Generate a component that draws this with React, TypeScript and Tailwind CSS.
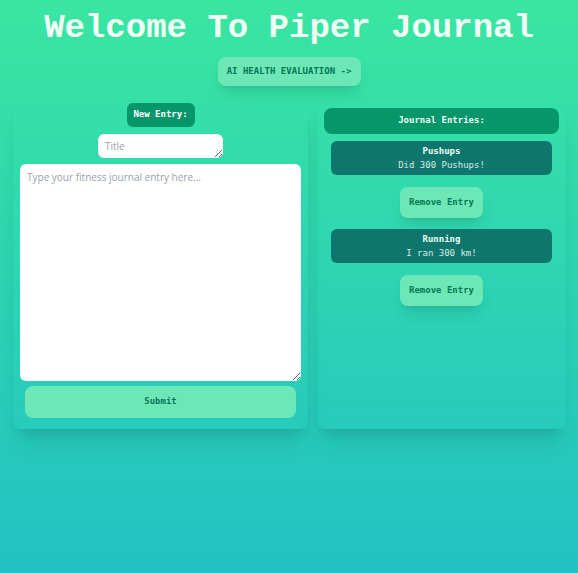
import { useState } from "react";

type Entry = { title: string; body: string };

const mono = "font-['Liberation_Mono',monospace]";
const small = "font-['DejaVu_Sans_Mono',monospace] text-[9px]";

export default function App() {
  const [entries, setEntries] = useState<Entry[]>([
    { title: "Pushups", body: "Did 300 Pushups!" },
    { title: "Running", body: "I ran 300 km!" },
  ]);
  const [title, setTitle] = useState("");
  const [body, setBody] = useState("");

  const submit = () => {
    if (!title && !body) return;
    setEntries([...entries, { title, body }]);
    setTitle("");
    setBody("");
  };

  return (
    <div className="min-h-[573px] w-full bg-gradient-to-b from-[#3ae6a0] to-[#21c2c3] pb-10">
      <h1
        className={`${mono} pt-[6px] text-center text-[34px] leading-[44px] font-bold text-[#f3fdf8]`}
      >
        Welcome To Piper Journal
      </h1>

      <div className="mt-[7px] flex justify-center">
        <button
          className={`${small} h-[29px] w-[143px] rounded-lg bg-[#6ee7b7] font-bold text-[#047857] shadow-lg`}
        >
          AI HEALTH EVALUATION -&gt;
        </button>
      </div>

      <div className="mt-[14px] flex gap-[9px] pr-[12px] pl-[13px]">
        {/* new entry form */}
        <div className="flex h-[329px] w-[295px] flex-col items-center rounded-lg px-[7px] pt-[3px] shadow-xl">
          <div
            className={`${small} flex h-[24px] w-[68px] items-center justify-center rounded-md bg-[#059669] font-bold text-white`}
          >
            New Entry:
          </div>
          <textarea
            value={title}
            onChange={(e) => setTitle(e.target.value)}
            placeholder="Title"
            className="mt-[7px] h-[24px] w-[125px] rounded-md bg-white px-[7px] py-[5px] font-['Open_Sans',sans-serif] text-[10px] leading-[14px] text-gray-700 outline-none placeholder:text-gray-400"
          />
          <textarea
            value={body}
            onChange={(e) => setBody(e.target.value)}
            placeholder="Type your fitness journal entry here..."
            className="mt-[6px] h-[217px] w-full rounded-md bg-white px-[7px] py-[6px] font-['Open_Sans',sans-serif] text-[10px] leading-[14px] text-gray-700 outline-none placeholder:text-gray-400"
          />
          <button
            onClick={submit}
            className={`${small} mt-[5px] h-[32px] w-[271px] rounded-lg bg-[#6ee7b7] font-bold text-[#047857]`}
          >
            Submit
          </button>
        </div>

        {/* journal list */}
        <div className="flex h-[329px] w-[249px] flex-col items-center rounded-lg px-[7px] pt-[8px] shadow-xl">
          <div
            className={`${small} flex h-[26px] w-full items-center justify-center rounded-lg bg-[#059669] font-bold text-[#ecfdf5]`}
          >
            Journal Entries:
          </div>
          {entries.map((entry, i) => (
            <div key={i} className="flex w-full flex-col items-center">
              <div
                className={`${small} mt-[7px] flex h-[34px] w-[221px] flex-col items-center justify-center rounded-md bg-[#0f766e] leading-[14px]`}
              >
                <span className="font-bold text-[#ecfdf5]">{entry.title}</span>
                <span className="text-[#d3ece6]">{entry.body}</span>
              </div>
              <button
                onClick={() => setEntries(entries.filter((_, j) => j !== i))}
                className={`${small} mt-[12px] mb-[4px] h-[31px] w-[83px] rounded-lg bg-[#6ee7b7] font-bold text-[#047857] shadow-lg`}
              >
                Remove Entry
              </button>
            </div>
          ))}
        </div>
      </div>
    </div>
  );
}
